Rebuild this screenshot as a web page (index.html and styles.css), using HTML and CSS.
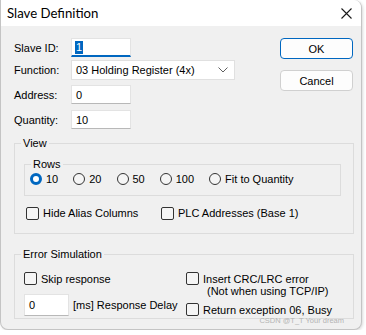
FILE: index.html
```html
<!DOCTYPE html>
<html lang="en">
<head>
  <meta charset="UTF-8">
  <title>Slave Definition</title>
  <link rel="stylesheet" href="styles.css">
</head>
<body>

  <div class="window">
    <div class="titlebar">
      <span class="title">Slave Definition</span>
      <span class="close">
        <svg width="11" height="11" viewBox="0 0 11 11"><path d="M0.5 0.5 L10.5 10.5 M10.5 0.5 L0.5 10.5" stroke="#1a1a1a" stroke-width="1.1" fill="none"/></svg>
      </span>
    </div>

    <div class="content">
      <div class="top">
        <div class="fields">
          <div class="row r1">
            <label>Slave ID:</label>
            <div class="input focus short"><span class="sel">1</span></div>
          </div>
          <div class="row r2">
            <label>Function:</label>
            <div class="select">
              <span>03 Holding Register (4x)</span>
              <svg width="10" height="6" viewBox="0 0 10 6"><path d="M0.5 0.5 L5 5 L9.5 0.5" stroke="#606060" stroke-width="1" fill="none"/></svg>
            </div>
          </div>
          <div class="row r3">
            <label>Address:</label>
            <div class="input short">0</div>
          </div>
          <div class="row r4">
            <label>Quantity:</label>
            <div class="input short">10</div>
          </div>
        </div>
        <div class="buttons">
          <button class="btn ok">OK</button>
          <button class="btn">Cancel</button>
        </div>
      </div>

      <fieldset class="group view">
        <legend>View</legend>
        <fieldset class="group rows">
          <legend>Rows</legend>
          <div class="radios">
            <label class="opt"><span class="radio on"></span>10</label>
            <label class="opt"><span class="radio"></span>20</label>
            <label class="opt"><span class="radio"></span>50</label>
            <label class="opt"><span class="radio"></span>100</label>
            <label class="opt"><span class="radio"></span>Fit to Quantity</label>
          </div>
        </fieldset>
        <div class="checks">
          <label class="opt hide"><span class="check"></span>Hide Alias Columns</label>
          <label class="opt"><span class="check"></span>PLC Addresses (Base 1)</label>
        </div>
      </fieldset>

      <fieldset class="group errors">
        <legend>Error Simulation</legend>
        <div class="cols">
          <div class="col left">
            <label class="opt"><span class="check"></span>Skip response</label>
            <div class="delay">
              <div class="input delay-box">0</div>
              <span>[ms] Response Delay</span>
            </div>
          </div>
          <div class="col right">
            <label class="opt crc"><span class="check"></span>Insert CRC/LRC error</label>
            <div class="note">(Not when using TCP/IP)</div>
            <label class="opt"><span class="check"></span>Return exception 06, Busy</label>
          </div>
        </div>
      </fieldset>
    </div>

    <div class="watermark">CSDN @T_T Your dream</div>
  </div>

</body>
</html>
```

FILE: styles.css
```css
body {
  margin: 0;
  background: #ffffff;
  font-family: "Liberation Sans", Arial, sans-serif;
  font-size: 11px;
  color: #000;
}
.window {
  position: relative;
  width: 362px;
  height: 330px;
  box-sizing: border-box;
  border: 1px solid #c4c4c4;
  border-top: none;
  border-radius: 0 8px 8px 8px;
  background: #f0f0f0;
  overflow: hidden;
  box-shadow: 1px 1px 3px rgba(0, 0, 0, 0.15);
}
.titlebar {
  height: 26px;
  background: #ffffff;
  display: flex;
  align-items: center;
  justify-content: space-between;
  padding: 0 9px 0 6px;
}
.title {
  font-family: Lato, sans-serif;
  font-size: 13.2px;
  padding-bottom: 1px;
}
.close {
  display: flex;
}
.content {
  padding: 0 8px 0 13px;
}
.top {
  display: flex;
  justify-content: space-between;
}
.fields {
  padding-top: 12px;
}
.row {
  display: flex;
  align-items: center;
}
.row label {
  width: 57px;
}
.r2 { margin-top: 3px; }
.r3 { margin-top: 5px; }
.r4 { margin-top: 6px; }
.input {
  box-sizing: border-box;
  height: 19px;
  background: #fff;
  border: 1px solid #e3e3e3;
  border-bottom-color: #b8b8b8;
  padding: 0 0 0 4px;
  display: flex;
  align-items: center;
}
.short { width: 60px; }
.focus {
  border-bottom: 2px solid #0067c0;
  padding-left: 3px;
}
.sel {
  background: #0067c0;
  color: #fff;
  padding: 0 1px;
  line-height: 13px;
}
.select {
  box-sizing: border-box;
  width: 164px;
  height: 20px;
  background: #fff;
  border: 1px solid #e0e0e0;
  display: flex;
  align-items: center;
  justify-content: space-between;
  padding: 0 6px 0 4px;
}
.buttons {
  padding-top: 12px;
  display: flex;
  flex-direction: column;
  gap: 11px;
}
.btn {
  width: 73px;
  height: 21px;
  font-family: "Liberation Sans", Arial, sans-serif;
  font-size: 11px;
  background: #fdfdfd;
  border: 1px solid #d0d0d0;
  border-radius: 4px;
  padding: 0;
}
.btn.ok {
  border-color: #0067c0;
}
.group {
  margin: 0;
  border: 1px solid #dcdcdc;
  padding: 0;
  min-width: 0;
}
.group legend {
  padding: 0 2px;
  margin-left: -3px;
  line-height: 13px;
}
.view {
  margin-top: 8px;
  width: 340px;
  box-sizing: border-box;
  padding: 0 12px 0 9px;
}
.rows {
  margin-top: 8px;
  padding: 0 0 0 5px;
}
.rows legend {
  margin-left: 1px;
}
.radios {
  display: flex;
  gap: 15px;
  height: 18px;
  align-items: center;
  margin-top: -1px;
  margin-bottom: 7px;
}
.opt {
  display: flex;
  align-items: center;
  gap: 4px;
}
.radio {
  width: 10px;
  height: 10px;
  border: 1px solid #333;
  border-radius: 50%;
  background: #f5f5f5;
}
.radio.on {
  width: 6px;
  height: 6px;
  border: 3px solid #0067c0;
  background: #fff;
}
.check {
  width: 11px;
  height: 11px;
  border: 1px solid #333;
  border-radius: 2px;
  background: #f5f5f5;
}
.checks {
  display: flex;
  height: 18px;
  align-items: center;
  margin-top: 8px;
  margin-bottom: 11px;
  padding-left: 2px;
}
.checks .hide {
  width: 135px;
}
.errors {
  margin-top: 14px;
  width: 340px;
  box-sizing: border-box;
  padding: 0 0 0 9px;
}
.cols {
  display: flex;
  margin-top: 11px;
  height: 46px;
}
.col.left {
  width: 162px;
  display: flex;
  flex-direction: column;
  gap: 9px;
}
.delay {
  display: flex;
  align-items: center;
  gap: 4px;
}
.delay-box {
  width: 45px;
  height: 22px;
}
.col.right {
  display: flex;
  flex-direction: column;
}
.note {
  padding-left: 21px;
  line-height: 13px;
  margin-bottom: 5px;
}
.watermark {
  position: absolute;
  right: 17px;
  bottom: 4px;
  font-size: 7.5px;
  color: #b4b4b4;
}
```
